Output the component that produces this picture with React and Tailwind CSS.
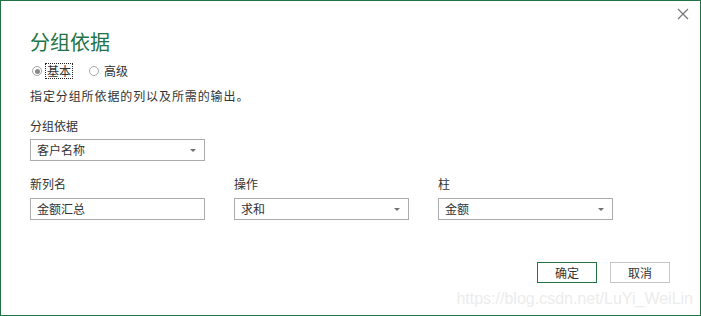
import React from "react";

const font = { fontFamily: '"Noto Sans CJK SC", "Noto Sans", sans-serif' };

const Select = ({ value, className = "" }) => (
  <div
    className={`flex items-center justify-between w-[175px] h-[22px] border border-[#ababab] bg-white pl-[6px] pr-[8px] text-[12px] text-[#333] ${className}`}
  >
    <span className="leading-[16px]">{value}</span>
    <span className="w-0 h-0 border-l-[3px] border-r-[3px] border-t-[3px] border-l-transparent border-r-transparent border-t-[#707070]" />
  </div>
);

const Input = ({ value }) => (
  <div className="flex items-center w-[175px] h-[22px] border border-[#ababab] bg-white pl-[6px] text-[12px] text-[#333]">
    <span className="leading-[16px]">{value}</span>
  </div>
);

const Radio = ({ checked, label, focused }) => (
  <div className="flex items-center gap-[4px]">
    <span className="flex items-center justify-center w-[10px] h-[10px] rounded-full border border-[#a8a8a8] bg-white">
      {checked && <span className="w-[5px] h-[5px] rounded-full bg-[#8a8a8a]" />}
    </span>
    <span
      className={`leading-[14px] px-[1px] ${
        focused ? "outline outline-1 outline-dotted outline-[#222]" : ""
      }`}
    >
      {label}
    </span>
  </div>
);

export default function App() {
  return (
    <div
      style={font}
      className="relative w-[701px] h-[316px] bg-white border border-[#217346] pl-[29px] pt-[29px] text-[#333]"
    >
      {/* Close */}
      <svg
        className="absolute right-[11px] top-[7px]"
        width="12"
        height="12"
        viewBox="0 0 12 12"
      >
        <path d="M1 1 L11 11 M11 1 L1 11" stroke="#777" strokeWidth="1.2" />
      </svg>

      <h1 className="text-[20px] leading-[24px] text-[#217346] font-normal">
        分组依据
      </h1>

      <div className="flex items-center gap-[17px] mt-[10px] text-[12px] leading-[16px] pl-[2px]">
        <Radio checked label="基本" focused />
        <Radio label="高级" />
      </div>

      <p className="mt-[10px] text-[12px] leading-[16px] tracking-[0.9px]">
        指定分组所依据的列以及所需的输出。
      </p>

      <div className="mt-[14px] text-[12px] leading-[16px]">分组依据</div>
      <Select value="客户名称" className="mt-[5px]" />

      <div className="flex gap-[29px] mt-[15px]">
        <div className="flex flex-col gap-[6px]">
          <div className="text-[12px] leading-[16px]">新列名</div>
          <Input value="金额汇总" />
        </div>
        <div className="flex flex-col gap-[6px]">
          <div className="text-[12px] leading-[16px]">操作</div>
          <Select value="求和" />
        </div>
        <div className="flex flex-col gap-[6px]">
          <div className="text-[12px] leading-[16px]">柱</div>
          <Select value="金额" />
        </div>
      </div>

      <div className="flex justify-end gap-[13px] mt-[42px] pr-[30px]">
        <button className="w-[60px] h-[21px] border border-[#217346] text-[12px] leading-[16px] text-[#333] bg-white">
          确定
        </button>
        <button className="w-[60px] h-[21px] border border-[#c6c6c6] text-[12px] leading-[16px] text-[#333] bg-white">
          取消
        </button>
      </div>

      {/* watermark */}
      <div
        className="absolute right-[7px] bottom-[7px] text-[16px] leading-[18px] text-[#ececec]"
        style={{ fontFamily: '"Liberation Sans", Arial, sans-serif' }}
      >
        https://blog.csdn.net/LuYi_WeiLin
      </div>
    </div>
  );
}
